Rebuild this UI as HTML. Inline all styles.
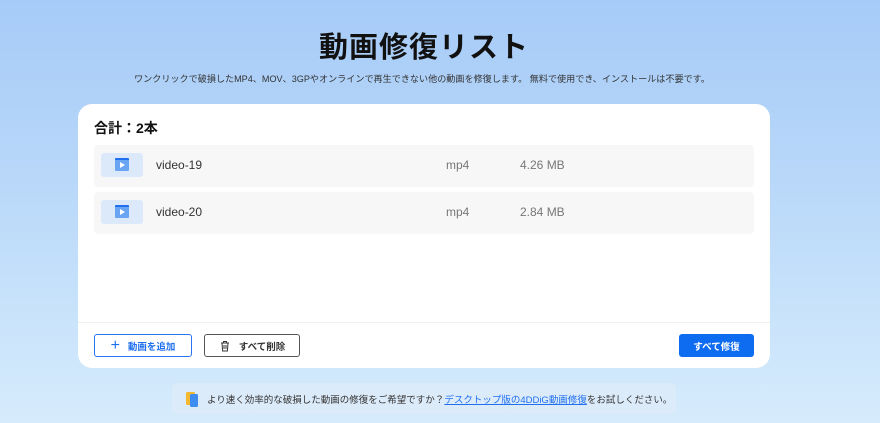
<!DOCTYPE html>
<html><head><meta charset="utf-8"><style>
*{margin:0;padding:0;box-sizing:border-box}
body{width:880px;height:423px;overflow:hidden;background:linear-gradient(180deg,#a6cbf8 0%,#bcdaf9 50%,#d6ecfc 100%);font-family:"Liberation Sans","Noto Sans CJK JP",sans-serif;position:relative;color:#222}
h1{position:absolute;top:24px;left:-16px;width:880px;text-align:center;font-size:29px;font-weight:bold;color:#111;letter-spacing:1px}
.sub{position:absolute;top:71px;left:-18px;width:880px;text-align:center;font-size:9.1px;color:#333}
.card{position:absolute;left:78px;top:104px;width:692px;height:264px;background:#fff;border-radius:14px}
.total{position:absolute;left:16px;top:14px;font-size:14px;font-weight:bold;color:#111}
.row{position:absolute;left:16px;width:660px;height:42px;background:#f7f7f8;border-radius:4px}
.thumb{position:absolute;left:7px;top:8px;width:42px;height:24px;background:#dce9fb;border-radius:3px}
.thumb i{position:absolute;left:14px;top:5px;width:14px;height:13px;background:#6aa5f4;border-top:2px solid #1f6ff0;border-radius:1px}
.thumb i:after{content:"";position:absolute;left:5px;top:2px;border-left:5px solid #fff;border-top:3px solid transparent;border-bottom:3px solid transparent}
.name{position:absolute;left:62px;top:13px;font-size:12px;color:#333}
.ext{position:absolute;left:352px;top:13px;font-size:12px;color:#777}
.size{position:absolute;left:426px;top:13px;font-size:12px;color:#777}
.div{position:absolute;left:0;top:218px;width:692px;height:1px;background:#eef0f3}
.btn{position:absolute;top:230px;height:23px;border-radius:3px;font-size:9.5px;font-weight:bold;display:flex;align-items:center;justify-content:center}
.add{left:16px;width:98px;border:1px solid #2b74f0;color:#1f6ff0}
.del{left:126px;width:96px;border:1px solid #555;color:#333}
.fix{left:601px;width:75px;background:#0e6cf0;color:#fff}
.tip{position:absolute;left:172px;top:383px;width:504px;height:31px;background:#dcebfa;border-radius:6px;font-size:9.5px;color:#333;display:flex;align-items:center;padding-left:14px}
.tip a{color:#1f6ff0;text-decoration:underline}
</style></head><body>
<h1>動画修復リスト</h1>
<div class="sub">ワンクリックで破損したMP4、MOV、3GPやオンラインで再生できない他の動画を修復します。 無料で使用でき、インストールは不要です。</div>
<div class="card">
<div class="total">合計：2本</div>
<div class="row" style="top:41px"><div class="thumb"><i></i></div><div class="name">video-19</div><div class="ext">mp4</div><div class="size">4.26 MB</div></div>
<div class="row" style="top:88px"><div class="thumb"><i></i></div><div class="name">video-20</div><div class="ext">mp4</div><div class="size">2.84 MB</div></div>
<div class="div"></div>
<div class="btn add"><span style="font-size:16px;font-weight:normal;margin-right:8px">+</span>動画を追加</div>
<div class="btn del"><svg width="12" height="12" viewBox="0 0 12 12" style="margin-right:8px"><path d="M2 3h8M4.5 3V1.5h3V3M3 3l.6 8h4.8L9 3M5 5v4M7 5v4" fill="none" stroke="#333" stroke-width="1"/></svg>すべて削除</div>
<div class="btn fix">すべて修復</div>
</div>
<div class="tip"><svg width="12" height="16" viewBox="0 0 12 16" style="margin-right:9px"><rect x="0" y="1" width="9" height="13" rx="1.5" fill="#f5b72d"/><rect x="4" y="3" width="8" height="13" rx="1.5" fill="#3d8cf0"/></svg>より速く効率的な破損した動画の修復をご希望ですか？<a>デスクトップ版の4DDiG動画修復</a>をお試しください。</div>
</body></html>
